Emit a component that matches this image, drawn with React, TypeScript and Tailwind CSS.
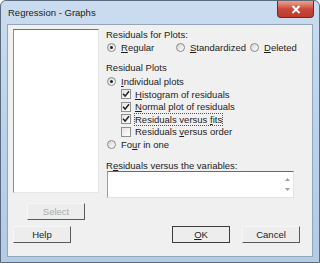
import React from 'react';

const font = { fontFamily: '"Liberation Sans", Arial, sans-serif' };

function Radio({ checked }: { checked?: boolean }) {
  return (
    <span className="ml-[1px] mr-[5px] flex h-[9px] w-[9px] shrink-0 items-center justify-center rounded-full border border-[#8a8a8a] bg-gradient-to-br from-[#d4d4d4] to-white">
      {checked && <span className="h-[3px] w-[3px] rounded-full bg-[#222]" />}
    </span>
  );
}

function Check({ checked }: { checked?: boolean }) {
  return (
    <span className="mr-[4px] flex h-[10px] w-[10px] shrink-0 items-center justify-center border border-[#8e8f8f] bg-gradient-to-br from-[#e4e4e4] to-white">
      {checked && (
        <svg width="8" height="8" viewBox="0 0 8 8">
          <path d="M1 3.8 L3.1 6.1 L7 1.2" fill="none" stroke="#222" strokeWidth="1.5" />
        </svg>
      )}
    </span>
  );
}

function Btn({ children, disabled, def }: { children: React.ReactNode; disabled?: boolean; def?: boolean }) {
  return (
    <div
      className={`flex h-[17px] w-[58px] items-center justify-center border ${
        def ? 'border-[#3c3c3c]' : 'border-t-[#f6f6f6] border-l-[#f6f6f6] border-r-[#5a5a5a] border-b-[#5a5a5a]'
      } bg-[#ededed] text-[9.5px] ${disabled ? 'text-[#ababab]' : 'text-[#1c1c1c]'}`}
    >
      {children}
    </div>
  );
}

export default function App() {
  return (
    <div style={font} className="h-[263px] w-[320px] overflow-hidden bg-white">
      <div className="flex h-[263px] w-[320px] flex-col rounded-t-[6px] border border-[#5a6b7d] bg-gradient-to-b from-[#cadcef] via-[#bcd2ea] to-[#b4cbe4]">
        {/* Title bar */}
        <div className="flex h-[23px] items-start">
          <span className="ml-[7px] mt-[5px] text-[9.5px] leading-[13px] text-[#222]">Regression - Graphs</span>
          <div className="ml-auto mr-[5px] flex h-[17px] w-[37px] items-center justify-center rounded-b-[4px] border border-t-0 border-[#6e2a2a] bg-gradient-to-b from-[#e7a393] via-[#c9483a] to-[#c0392e]">
            <svg width="10" height="9" viewBox="0 0 10 9">
              <path d="M1.5 1 L8.5 8 M8.5 1 L1.5 8" stroke="#fff" strokeWidth="2" />
            </svg>
          </div>
        </div>

        {/* Client area */}
        <div className="mx-[6px] flex h-[233px] flex-col border border-[#8fa6bf] bg-[#f0f0f0] text-[9.5px] leading-[13px] text-[#1c1c1c]">
          <div className="flex items-start">
            {/* left column */}
            <div className="ml-[5px] flex flex-col">
              <div className="mt-[4px] h-[164px] w-[86px] border border-t-[#6f6f6f] border-l-[#8d8d8d] border-r-[#e6e6e6] border-b-[#e6e6e6] bg-white" />
              <div className="ml-[14px] mt-[10px]">
                <Btn disabled>Select</Btn>
              </div>
            </div>

            {/* right column */}
            <div className="ml-[7px] flex flex-col">
              <div className="mt-[3px] h-[13px]">Residuals for Plots:</div>
              <div className="flex h-[13px] items-center">
                <div className="flex w-[69px] items-center">
                  <Radio checked />
                  <span><u>R</u>egular</span>
                </div>
                <div className="flex w-[74px] items-center">
                  <Radio />
                  <span><u>S</u>tandardized</span>
                </div>
                <div className="flex items-center">
                  <Radio />
                  <span><u>D</u>eleted</span>
                </div>
              </div>

              <div className="mt-[7px] h-[13px]">Residual Plots</div>
              <div className="mt-[1px] flex h-[13px] items-center">
                <Radio checked />
                <span><u>I</u>ndividual plots</span>
              </div>
              <div className="ml-[15px] flex flex-col">
                <div className="flex h-[12px] items-center">
                  <Check checked />
                  <span><u>H</u>istogram of residuals</span>
                </div>
                <div className="flex h-[13px] items-center">
                  <Check checked />
                  <span><u>N</u>ormal plot of residuals</span>
                </div>
                <div className="flex h-[12px] items-center">
                  <Check checked />
                  <span className="-ml-[1px] border border-dotted border-[#555] leading-[11px]">Residuals versus <u>f</u>its</span>
                </div>
                <div className="flex h-[13px] items-center">
                  <Check />
                  <span>Residuals <u>v</u>ersus order</span>
                </div>
              </div>
              <div className="flex h-[13px] items-center">
                <Radio />
                <span>Fo<u>u</u>r in one</span>
              </div>

              <div className="mt-[8px] h-[12px]">R<u>e</u>siduals versus the variables:</div>
              <div className="ml-[1px] flex h-[27px] w-[187px] justify-end border border-t-[#6a6a6a] border-l-[#9a9a9a] border-r-[#e2e2e2] border-b-[#e2e2e2] bg-white">
                <div className="flex w-[12px] flex-col items-center justify-around py-[2px]">
                  <svg width="5" height="3" viewBox="0 0 5 3"><path d="M0 3 L2.5 0 L5 3 Z" fill="#a0a0a0" /></svg>
                  <svg width="5" height="3" viewBox="0 0 5 3"><path d="M0 0 L2.5 3 L5 0 Z" fill="#a0a0a0" /></svg>
                </div>
              </div>
            </div>
          </div>

          {/* bottom buttons */}
          <div className="mt-[6px] flex items-center px-[5px]">
            <Btn>Help</Btn>
            <div className="ml-auto flex gap-[12px] pr-[7px]">
              <Btn def><u>O</u>K</Btn>
              <Btn>Cancel</Btn>
            </div>
          </div>
        </div>
      </div>
    </div>
  );
}
